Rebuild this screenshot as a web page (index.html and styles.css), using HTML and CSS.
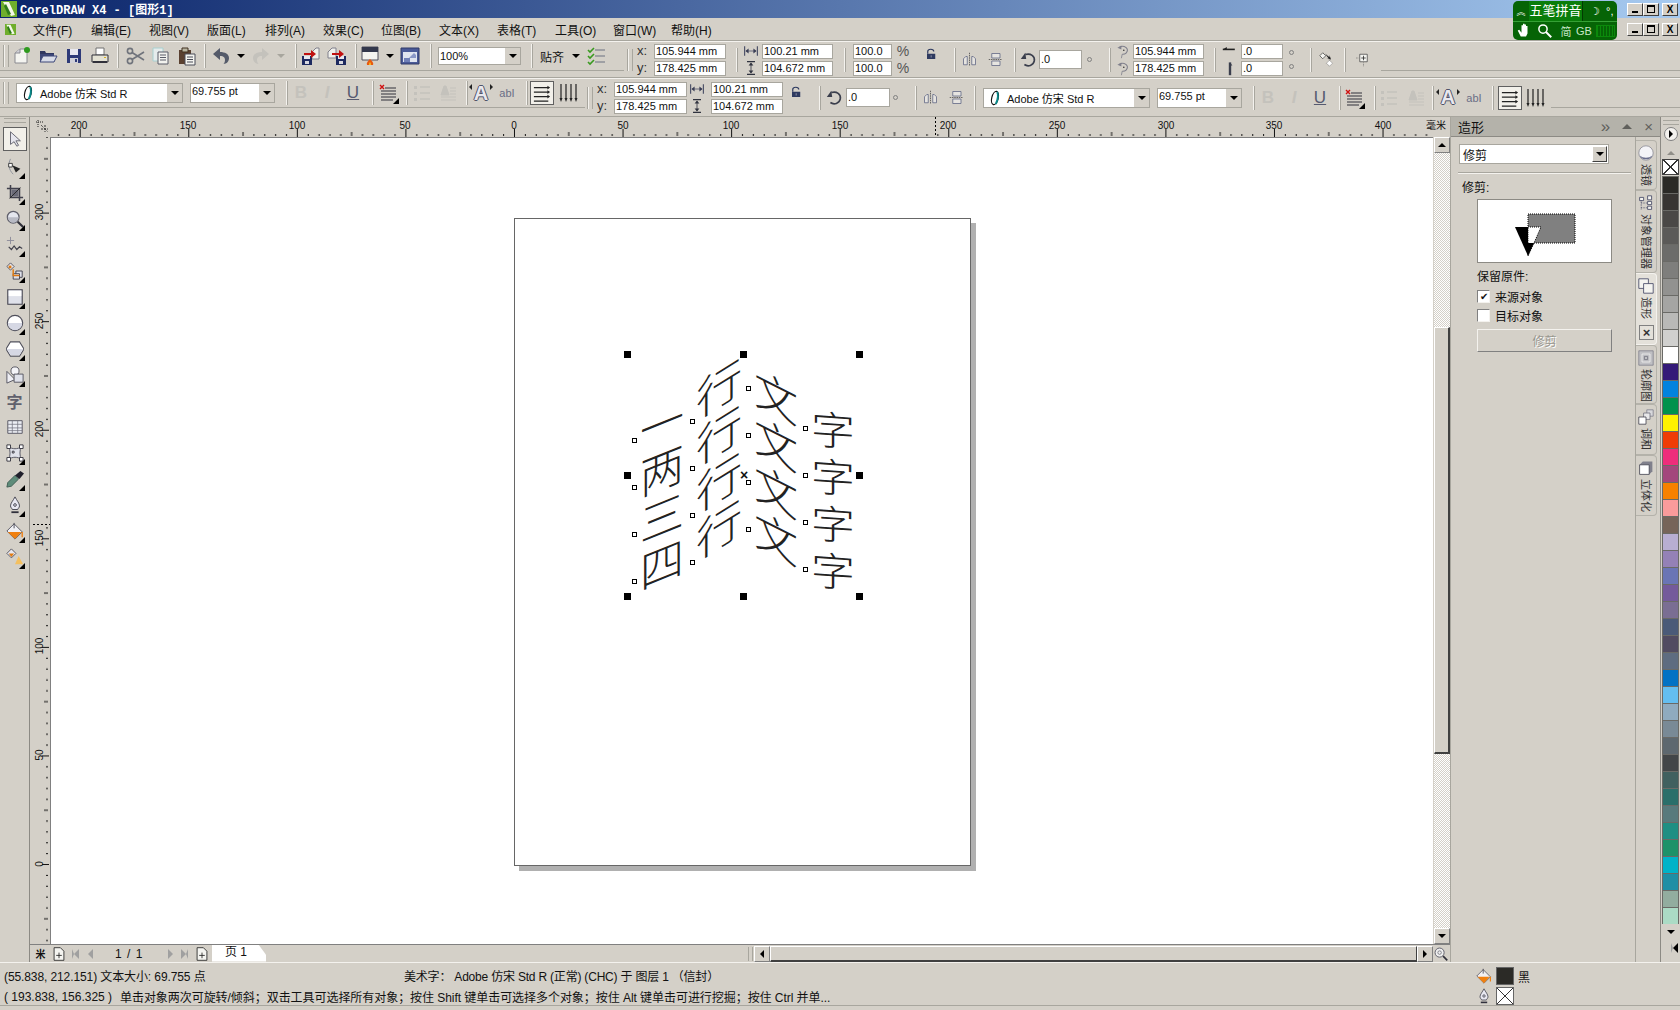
FILE: index.html
```html
<!DOCTYPE html>
<html lang="zh-CN">

<head>
  <meta charset="UTF-8" />
  <title>CorelDRAW X4 - [图形1]</title>
  <link rel="stylesheet" href="styles.css">
</head>

<body>
  <!-- icons -->
  <svg class="defs" aria-hidden="true">
    <symbol id="i-logo" viewBox="0 0 16 16"><path d="M0 0h16v16H0z" fill="#6fae2c"/><path d="M2 1h6l6 13-4 1L5 6z" fill="#f4f8ea"/><path d="M5 3l5 10-3 1L3 5z" fill="#2f7d1a"/></symbol>
    <symbol id="i-new" viewBox="0 0 20 20"><path d="M3 7l5-4h7v14H3z" fill="#f4f4f0" stroke="#8a8a90"/><path d="M3 7h5V3" fill="#d0d0d8" stroke="#8a8a90"/><circle cx="15" cy="4" r="3" fill="#2f9a1e"/></symbol>
    <symbol id="i-open" viewBox="0 0 20 20"><path d="M2 5h5l1 2h8v3H2z" fill="#2e3660"/><path d="M2 16V8h14v8z" fill="#3c4678"/><path d="M5 10h14l-3 6H2z" fill="#d8dce8" stroke="#3c4678"/></symbol>
    <symbol id="i-save" viewBox="0 0 20 20"><path d="M3 3h14v14H3z" fill="#2e3a78"/><path d="M6 3h8v6H6z" fill="#e8e8f0"/><path d="M6 12h8v5H6z" fill="#d0d0d8"/><path d="M11 13h2v3h-2z" fill="#2e3a78"/></symbol>
    <symbol id="i-print" viewBox="0 0 20 20"><path d="M6 2h8v7H6z" fill="#fff" stroke="#707070"/><path d="M2 9h16v7H2z" fill="#e4e2d4" stroke="#30303a"/><path d="M3 15h14v2H3z" fill="#30303a"/><path d="M14 11h2v1h-2z" fill="#d8b020"/></symbol>
    <symbol id="i-cut" viewBox="0 0 20 20"><g fill="none" stroke="#70747c" stroke-width="1.6"><circle cx="5" cy="5" r="2.6"/><circle cx="5" cy="15" r="2.6"/><path d="M7 6.500L19 14M7 13.500L19 6"/></g></symbol>
    <symbol id="i-copy" viewBox="0 0 20 20"><path d="M2 2h10v13H2z" fill="#e6ecec" stroke="#a8d0d0"/><path d="M7 6h10v12H7z" fill="#f2f2ee" stroke="#5a5c68"/><path d="M9 9h6M9 11.500h6M9 14h6" stroke="#5a5c68"/></symbol>
    <symbol id="i-paste" viewBox="0 0 20 20"><path d="M2 4h12v14H2z" fill="#5a4030"/><path d="M5 2h6v4H5z" fill="#b8b4a0" stroke="#403020"/><path d="M8 8h10v11H8z" fill="#f4f4f0" stroke="#4a4c58"/><path d="M10 11h6M10 13.500h6M10 16h6" stroke="#4a4c58"/></symbol>
    <symbol id="i-undo" viewBox="0 0 20 20"><path d="M9 2L2 8l7 6v-4c4 0 5 2 5 4 0 2-1 4-2 4 4 0 6-3 6-6 0-4-4-6-9-6z" fill="#555b6a"/></symbol>
    <symbol id="i-redo" viewBox="0 0 20 20"><path d="M11 2l7 6-7 6v-4c-4 0-5 2-5 4 0 2 1 4 2 4-4 0-6-3-6-6 0-4 4-6 9-6z" fill="#c4c2bc"/></symbol>
    <symbol id="i-import" viewBox="0 0 20 20"><path d="M11 6l4-4h3v11h-7z" fill="#f0f0ec" stroke="#80808c"/><path d="M1 10h10v9H1z" fill="#1e2a60"/><path d="M3 10h6v3H3z" fill="#e8e8f0"/><path d="M4 15h4v3H4z" fill="#d8d8e0"/><path d="M3 7h7V4l5 4-5 4V9H3z" fill="#c01010"/></symbol>
    <symbol id="i-export" viewBox="0 0 20 20"><path d="M1 6l4-4h4v10H1z" fill="#f0f0ec" stroke="#80808c"/><path d="M9 10h10v9H9z" fill="#1e2a60"/><path d="M11 10h6v3h-6z" fill="#e8e8f0"/><path d="M12 15h4v3h-4z" fill="#d8d8e0"/><path d="M5 7h7V4l5 4-5 4V9H5z" fill="#c01010"/></symbol>
    <symbol id="i-publish" viewBox="0 0 20 20"><path d="M2 1h16v13H2z" fill="#f4f4f0" stroke="#50505c"/><path d="M2 1h16v5H2z" fill="#33384c"/><path d="M7 19c-1-2 1-4 3-6 2 2 4 4 3 6z" fill="#e85a10"/><path d="M9 19c0-2 1-3 1-3s1 1 1 3z" fill="#f8c020"/></symbol>
    <symbol id="i-launch" viewBox="0 0 20 20"><path d="M1 2h18v16H1z" fill="#4a5a98" stroke="#303a68"/><path d="M3 6h14v10H3z" fill="#dfe4f0"/><path d="M9 12l5-5 2 2v3z" fill="#8a98c8"/><path d="M4 12h6v4H4z" fill="#7080b8"/></symbol>
    <symbol id="i-options" viewBox="0 0 20 20"><path d="M9 4h10M9 10h10M9 16h10" stroke="#6a7080"/><path d="M2 4l2 2 4-4M2 10l2 2 4-4M2 16l2 2 4-4" fill="none" stroke="#3a9a20" stroke-width="1.6"/></symbol>
    <symbol id="i-font" viewBox="0 0 20 20"><ellipse cx="10" cy="10" rx="4" ry="8.500" transform="rotate(14 10 10)" fill="none" stroke="#111" stroke-width="1.500"/><path d="M12.500 2.500c2 2 1.500 9-1.500 15" fill="none" stroke="#0a8a8a" stroke-width="2.400"/></symbol>
    <symbol id="i-bullets" viewBox="0 0 20 20"><path d="M2 2l4 4M6 2L2 6" stroke="#d01010" stroke-width="1.400"/><path d="M7 5h11M3 8h15M3 11h15M3 14h15M3 17h12" stroke="#30303a"/></symbol>
    <symbol id="i-dotlist" viewBox="0 0 20 20"><path d="M8 4h10M8 10h10M8 16h10" stroke="#c4c2bc" stroke-width="1.500"/><path d="M2 3h3v3H2zM2 9h3v3H2zM2 15h3v3H2z" fill="#c4c2bc"/></symbol>
    <symbol id="i-dropcap" viewBox="0 0 20 20"><path d="M3 12l3-9h2l3 9zM12 5h6M12 8h6M12 11h6M3 14h15M3 17h15" fill="#c4c2bc" stroke="#c4c2bc"/></symbol>
    <symbol id="i-horiz" viewBox="0 0 20 20"><path d="M1 4h16M1 9h16M1 14h16M1 19h16" stroke="#222" stroke-width="1.200"/><path d="M16 2l3 2-3 2zM16 7l3 2-3 2zM16 12l3 2-3 2z" fill="#222"/></symbol>
    <symbol id="i-vert" viewBox="0 0 20 20"><path d="M3 1v15M8 1v15M13 1v15M18 1v15" stroke="#222" stroke-width="1.200"/><path d="M1.500 15l1.500 4 1.500-4zM6.500 15l1.500 4 1.500-4zM11.500 15l1.500 4 1.500-4zM16.500 15l1.500 4 1.500-4z" fill="#222"/></symbol>
    <symbol id="i-lock" viewBox="0 0 20 20"><path d="M5 9V6c0-4 8-4 8 0" fill="none" stroke="#2e3a60" stroke-width="1.600"/><path d="M4 9h11v7H4z" fill="#2e3a60"/><path d="M9 11h1v3H9z" fill="#aab"/></symbol>
    <symbol id="i-fliph" viewBox="0 0 20 20"><path d="M10 1v18" stroke="#444" stroke-dasharray="2 1"/><path d="M2 9l3-3h2v11H2zM13 6h2l3 3v8h-5z" fill="#e6e4e0" stroke="#5a6080"/></symbol>
    <symbol id="i-flipv" viewBox="0 0 20 20"><path d="M1 10h18" stroke="#444" stroke-dasharray="2 1"/><path d="M5 2h11v6H5zM5 12h11v6H5z" fill="#e6e4e0" stroke="#5a6080"/></symbol>
    <symbol id="i-rotate" viewBox="0 0 20 20"><path d="M7 4c6-2 11 2 10 7-1 5-7 7-11 4" fill="none" stroke="#3a3e4c" stroke-width="1.800"/><path d="M2 9l5-7 1 7z" fill="#3a3e4c"/></symbol>
    <symbol id="i-width" viewBox="0 0 20 20"><path d="M2 4v12M18 4v12" stroke="#50546a" stroke-width="1.500"/><path d="M4 10h12" stroke="#50546a"/><path d="M3 10l4-3v6zM17 10l-4-3v6z" fill="#3a3e55"/></symbol>
    <symbol id="i-height" viewBox="0 0 20 20"><path d="M5 2h10M5 18h10" stroke="#30333f" stroke-width="1.500"/><path d="M10 4v12" stroke="#30333f"/><path d="M10 3l-3 4h6zM10 17l-3-4h6z" fill="#30333f"/></symbol>
    <symbol id="i-centerh" viewBox="0 0 20 20"><path d="M6 5a6 5 0 1 1 3 9" fill="none" stroke="#80808c" stroke-width="1.400"/><path d="M3 6l5-3v5z" fill="#80808c"/><path d="M9 14l-1 5" stroke="#80808c"/><circle cx="11" cy="9" r="1" fill="#333"/></symbol>
    <symbol id="i-skewh" viewBox="0 0 20 20"><path d="M1 8h15" stroke="#222" stroke-width="2"/><path d="M1 8l5-3v3z" fill="#222"/></symbol>
    <symbol id="i-skewv" viewBox="0 0 20 20"><path d="M10 3v16" stroke="#3a3e4c" stroke-width="3"/><path d="M10 3l3 4h-3z" fill="#3a3e4c"/></symbol>
    <symbol id="i-relative" viewBox="0 0 20 20"><path d="M1 5l4-4 4 4-4 4z" fill="#f4f4f0" stroke="#444"/><path d="M10 15l4-4 4 4-4 4z" fill="#fff" stroke="#555" stroke-dasharray="1 1"/><path d="M8 2l6 5V4l2 6-6-1h3z" fill="#222"/></symbol>
    <symbol id="i-origin" viewBox="0 0 20 20"><path d="M5 3h10v10H5z" fill="#f4f4f0" stroke="#444"/><path d="M10 5v6M7 8h6" stroke="#222"/><path d="M0 8h4M10 14v6" stroke="#666" stroke-dasharray="1 1"/></symbol>
    <symbol id="i-corner" viewBox="0 0 14 14"><path d="M1 3h8M3 1v8M6 6l7 7" stroke="#222" stroke-dasharray="1 1"/><path d="M6 10h7M10 6v7" stroke="#333" stroke-dasharray="2 1"/></symbol>
    <symbol id="i-pick" viewBox="0 0 20 20"><path d="M5 2v14l4-3 3 5 2-1-3-5h5z" fill="#e6e6ee" stroke="#60606c"/></symbol>
    <symbol id="i-shape" viewBox="0 0 20 20"><path d="M5 1c-3 6-2 12 3 17" fill="none" stroke="#8a8e98"/><path d="M3 6h4v4H3z" fill="#fff" stroke="#333"/><path d="M7 8l9 4-5 4z" fill="#222"/></symbol>
    <symbol id="i-crop" viewBox="0 0 20 20"><path d="M5 1v14h14M1 5h14v14" fill="none" stroke="#40404c" stroke-width="1.700"/><path d="M6 6h8v8H6z" fill="#6a6a78"/><path d="M4 16L16 4" stroke="#222"/></symbol>
    <symbol id="i-zoom" viewBox="0 0 20 20"><circle cx="8" cy="8" r="6.500" fill="#e4e6ee" stroke="#60606c" stroke-width="1.400"/><path d="M2 8h12a6 6 0 0 1-12 0z" fill="#b8bac4"/><path d="M13 13l6 6" stroke="#30303a" stroke-width="2.400"/></symbol>
    <symbol id="i-free" viewBox="0 0 20 20"><path d="M5 1v8M1 5h8" stroke="#8a8a98"/><path d="M3 12l3 3 3-4 3 4 3-3 3 2" fill="none" stroke="#40404c" stroke-width="1.300"/></symbol>
    <symbol id="i-smart" viewBox="0 0 20 20"><path d="M1 5l4-4 4 4-4 4z" fill="#e8e8ee" stroke="#50505c"/><path d="M3 4h3v3H3z" fill="#e07a10"/><path d="M11 10h7v7h-7z" fill="#dfe1ea" stroke="#40404c"/><path d="M8 13h7v6H8z" fill="#dfe1ea" stroke="#40404c"/><path d="M8 8v7h7" fill="none" stroke="#e07a10" stroke-width="1.600"/></symbol>
    <symbol id="i-rect" viewBox="0 0 20 20"><path d="M2 2h16v16H2z" fill="#dfe1ea" stroke="#40404c" stroke-width="1.200"/><path d="M3 3h14v6H3z" fill="#fff"/></symbol>
    <symbol id="i-ellipse" viewBox="0 0 20 20"><circle cx="10" cy="10" r="8.500" fill="#fff" stroke="#50505c" stroke-width="1.300"/><path d="M2 10h16a8 8 0 0 1-16 0z" fill="#d6d8e4"/></symbol>
    <symbol id="i-poly" viewBox="0 0 20 20"><path d="M5 2h10l5 8-5 8H5l-5-8z" fill="#fff" stroke="#50505c" stroke-width="1.300"/><path d="M1 10h18l-4 7H5z" fill="#d6d8e4"/></symbol>
    <symbol id="i-basic" viewBox="0 0 20 20"><circle cx="10" cy="5.500" r="4.500" fill="#f4f4f8" stroke="#50505c"/><path d="M1 6l9 9-9 4z" fill="#eeeef4" stroke="#50505c"/><path d="M9 9h10v9H9z" fill="#dfe1ea" stroke="#50505c"/></symbol>
    <symbol id="i-table" viewBox="0 0 20 20"><path d="M2 3h16v14H2z" fill="#eceef4" stroke="#50505c"/><path d="M2 7h16M2 11h16M2 14h16M7 3v14M13 3v14" stroke="#70707c" stroke-width=".8"/></symbol>
    <symbol id="i-inter" viewBox="0 0 20 20"><path d="M3 3c4 3 10 3 14 0-2 4-2 10 0 14-4-3-10-3-14 0 2-4 2-10 0-14z" fill="#e0e2ea" stroke="#50505c"/><path d="M1 1h4v4H1zM15 1h4v4h-4zM1 15h4v4H1zM15 15h4v4h-4zM7 8h2v2H7z" fill="#fff" stroke="#30303a"/></symbol>
    <symbol id="i-drop" viewBox="0 0 20 20"><path d="M1 19l1-5 8-8 4 4-8 8z" fill="#5e8c7a" stroke="#3c5a50"/><path d="M10 6l6-5 4 3-5 6z" fill="#20202c"/></symbol>
    <symbol id="i-pen" viewBox="0 0 20 20"><path d="M10 1c-2 4-5 7-5 10 0 2 2 3 2 4h6c0-1 2-2 2-4 0-3-3-6-5-10z" fill="#e8e8f2" stroke="#40404c"/><circle cx="10" cy="10" r="1.500" fill="none" stroke="#40404c"/><path d="M6 17h8v2H6z" fill="#30303c"/></symbol>
    <symbol id="i-fill" viewBox="0 0 20 20"><path d="M1 10l8-8 9 9-8 8z" fill="#f0f0f4" stroke="#50505c"/><path d="M2 11h15l-7 8z" fill="#f08010"/><path d="M9 1v6" stroke="#40404c"/><path d="M18 11v6" stroke="#f08010" stroke-width="1.500"/></symbol>
    <symbol id="i-ifill" viewBox="0 0 20 20"><path d="M1 6l5-5 5 5-5 5z" fill="#e8e8f0" stroke="#50505c"/><path d="M3 6h6l-3 4z" fill="#e07a10"/><path d="M10 18l4-9 5 9z" fill="#f4c060"/></symbol>
    <symbol id="i-hand" viewBox="0 0 20 20"><path d="M5 18L1 10l2-1 3 4V3h2v7V1h2v9V2h2v8V4h2v10l-2 4z" fill="#fff"/></symbol>
    <symbol id="i-mag" viewBox="0 0 20 20"><circle cx="8" cy="8" r="5.500" fill="none" stroke="#fff" stroke-width="2"/><path d="M12 12l7 7" stroke="#fff" stroke-width="2.500"/></symbol>
    <symbol id="i-navzoom" viewBox="0 0 20 20"><circle cx="8" cy="8" r="6.500" fill="#eee" stroke="#60606c" stroke-width="1.400"/><circle cx="8" cy="8" r="2.500" fill="none" stroke="#60606c"/><path d="M13 13l6 6" stroke="#30303a" stroke-width="2.400"/></symbol>
    <symbol id="i-addpage" viewBox="0 0 20 20"><path d="M3 1h9l5 5v13H3z" fill="#f4f4f0" stroke="#222" stroke-width="1.200"/><path d="M10 8v8M6 12h8" stroke="#222" stroke-width="1.200"/></symbol>
    <symbol id="i-trim" viewBox="0 0 20 20"><path d="M1 1h12v12H1z" fill="#f4f4f0" stroke="#3c4060"/><path d="M7 7h12v12H7z" fill="#f4f4f0" stroke="#3c4060"/></symbol>
    <symbol id="i-contour" viewBox="0 0 20 20"><path d="M1 1h18v18H1z" fill="#c0c0c4" stroke="#80808c"/><path d="M5 5h10v10H5z" fill="none" stroke="#f0f0f0"/><path d="M8 8h4v4H8z" fill="none" stroke="#70707c"/></symbol>
    <symbol id="i-blend" viewBox="0 0 20 20"><path d="M11 1h8v8h-8z" fill="#d8d8dc" stroke="#80808c"/><path d="M7 5h8v8H7z" fill="#e8e8ea" stroke="#70707c"/><path d="M1 10h9v9H1z" fill="#fff" stroke="#40404c"/></symbol>
    <symbol id="i-extrude" viewBox="0 0 20 20"><path d="M2 6l4-4h12v12l-4 4z" fill="#80808c"/><path d="M2 6h12v12H2z" fill="#fff" stroke="#40404c"/></symbol>
    <symbol id="i-lens" viewBox="0 0 20 20"><circle cx="10" cy="10" r="9" fill="#f4f4f8" stroke="#8a8a94"/><path d="M2 13a9 9 0 0 0 16 0 12 12 0 0 1-16 0z" fill="#6a6e8c"/></symbol>
    <symbol id="i-tree" viewBox="0 0 20 20"><path d="M2 3h5v4H2zM12 1h5v5h-5zM12 8h5v4h-5zM12 14h5v4h-5z" fill="#f4f4f0" stroke="#3c4060"/><path d="M4 7v12M4 10h8M4 16h8" stroke="#3c4060" stroke-dasharray="1 1"/></symbol>
  </svg>

  <div class="app">
    <header class="titlebar">
      <svg class="title-logo"><use href="#i-logo" /></svg>
      <span class="title-text">CorelDRAW X4 - [图形1]</span>
      <div class="winctl">
        <button class="wbtn"><span class="w-min"></span></button>
        <button class="wbtn"><span class="w-max"></span></button>
        <button class="wbtn wbtn-x">X</button>
      </div>
    </header>

    <nav class="menubar">
      <svg class="menu-logo"><use href="#i-logo" /></svg>
      <span class="menu">文件(F)</span>
      <span class="menu">编辑(E)</span>
      <span class="menu">视图(V)</span>
      <span class="menu">版面(L)</span>
      <span class="menu">排列(A)</span>
      <span class="menu">效果(C)</span>
      <span class="menu">位图(B)</span>
      <span class="menu">文本(X)</span>
      <span class="menu">表格(T)</span>
      <span class="menu">工具(O)</span>
      <span class="menu">窗口(W)</span>
      <span class="menu">帮助(H)</span>
      <div class="winctl">
        <button class="wbtn"><span class="w-min"></span></button>
        <button class="wbtn"><span class="w-max"></span></button>
        <button class="wbtn wbtn-x">X</button>
      </div>
    </nav>

    <!-- 五笔输入法 -->
    <div class="ime">
      <div class="ime-top">
        <span class="ime-up">︽</span>
        <span class="ime-name">五笔拼音</span>
        <span class="ime-moon">☽</span>
        <span class="ime-dots">°,</span>
      </div>
      <div class="ime-bottom">
        <svg class="ime-ic"><use href="#i-hand" /></svg>
        <svg class="ime-ic"><use href="#i-mag" /></svg>
        <span class="ime-txt">简</span>
        <span class="ime-txt">GB</span>
        <span class="ime-kb"></span>
      </div>
    </div>

    <div class="tbrow">
      <div class="bar bar-std">
        <span class="grip"></span>
        <button class="btn"><svg><use href="#i-new" /></svg></button>
        <button class="btn"><svg><use href="#i-open" /></svg></button>
        <button class="btn"><svg><use href="#i-save" /></svg></button>
        <button class="btn"><svg><use href="#i-print" /></svg></button>
        <span class="sep ml4"></span>
        <button class="btn ml3"><svg><use href="#i-cut" /></svg></button>
        <button class="btn"><svg><use href="#i-copy" /></svg></button>
        <button class="btn"><svg><use href="#i-paste" /></svg></button>
        <span class="sep ml4"></span>
        <button class="btn ml2"><svg><use href="#i-undo" /></svg></button>
        <span class="arr"></span>
        <button class="btn"><svg><use href="#i-redo" /></svg></button>
        <span class="arr arr-off"></span>
        <span class="sep ml7"></span>
        <button class="btn ml1"><svg><use href="#i-import" /></svg></button>
        <button class="btn"><svg><use href="#i-export" /></svg></button>
        <span class="sep ml5"></span>
        <button class="btn"><svg><use href="#i-publish" /></svg></button>
        <span class="arr"></span>
        <button class="btn"><svg><use href="#i-launch" /></svg></button>
        <span class="sep ml7"></span>
        <div class="combo combo-zoom ml6"><span class="combo-val">100%</span><span class="combo-arr"></span></div>
        <span class="sep ml10"></span>
        <span class="snap ml7">贴齐</span>
        <span class="arr ml5"></span>
        <button class="btn"><svg><use href="#i-options" /></svg></button>
      </div>

      <div class="bar-prop">
        <span class="grip ml3"></span>
        <div class="labels w17 ml4"><span>x:</span><span>y:</span></div>
        <div class="fields w72"><span class="field">105.944 mm</span><span class="field">178.425 mm</span></div>
        <span class="sep ml10"></span>
        <div class="icons ml5"><svg><use href="#i-width" /></svg><svg><use href="#i-height" /></svg></div>
        <div class="fields w71 ml3"><span class="field">100.21 mm</span><span class="field">104.672 mm</span></div>
        <span class="sep ml11"></span>
        <div class="fields w39 ml7"><span class="field">100.0</span><span class="field">100.0</span></div>
        <div class="labels w14 ml4 pct"><span>%</span><span>%</span></div>
        <button class="btn btn-sm ml8 nudge"><svg><use href="#i-lock" /></svg></button>
        <span class="sep ml10"></span>
        <button class="btn btn-sm"><svg><use href="#i-fliph" /></svg></button>
        <button class="btn btn-sm"><svg><use href="#i-flipv" /></svg></button>
        <span class="sep ml6"></span>
        <div class="rot ml3"><svg><use href="#i-rotate" /></svg></div>
        <span class="field w43">.0</span>
        <span class="deg ml5"></span>
        <span class="sep ml15"></span>
        <div class="icons ml4"><svg><use href="#i-centerh" /></svg><svg><use href="#i-centerh" /></svg></div>
        <div class="fields w71 ml2"><span class="field">105.944 mm</span><span class="field">178.425 mm</span></div>
        <span class="sep ml10"></span>
        <div class="icons ml6"><svg><use href="#i-skewh" /></svg><svg><use href="#i-skewv" /></svg></div>
        <div class="fields w42 ml3"><span class="field">.0</span><span class="field">.0</span></div>
        <div class="degs ml4"><span class="deg"></span><span class="deg"></span></div>
        <span class="sep ml14"></span>
        <button class="btn btn-sm ml1"><svg><use href="#i-relative" /></svg></button>
        <span class="sep ml5"></span>
        <button class="btn btn-sm ml4"><svg><use href="#i-origin" /></svg></button>
      </div>
      <div class="bar bar-rest"></div>
    </div>

    <div class="tbrow tbrow2">
      <div class="bar bar-text">
        <span class="grip"></span>
        <div class="combo combo-font ml7"><svg class="combo-ic"><use href="#i-font" /></svg><span class="combo-val">Adobe 仿宋 Std R</span><span class="combo-arr"></span></div>
        <div class="combo combo-size ml7"><span class="combo-val">69.755 pt</span><span class="combo-arr"></span></div>
        <span class="sep ml11"></span>
        <button class="btn txt-b off">B</button>
        <button class="btn txt-i off">I</button>
        <button class="btn txt-u">U</button>
        <span class="sep ml6"></span>
        <button class="btn ml1 fly"><svg><use href="#i-bullets" /></svg></button>
        <span class="sep ml5"></span>
        <button class="btn ml1"><svg><use href="#i-dotlist" /></svg></button>
        <button class="btn"><svg><use href="#i-dropcap" /></svg></button>
        <span class="sep ml5"></span>
        <button class="btn txt-a">A</button>
        <button class="btn txt-ab">abI</button>
        <span class="sep ml6"></span>
        <button class="btn btn-on ml2"><svg><use href="#i-horiz" /></svg></button>
        <button class="btn ml1"><svg><use href="#i-vert" /></svg></button>
      </div>

      <div class="bar-prop bar-prop2">
        <span class="grip ml2"></span>
        <div class="labels w17 ml4"><span>x:</span><span>y:</span></div>
        <div class="fields w73"><span class="field">105.944 mm</span><span class="field">178.425 mm</span></div>
        <div class="icons ml2"><svg><use href="#i-width" /></svg><svg><use href="#i-height" /></svg></div>
        <div class="fields w72 ml6"><span class="field">100.21 mm</span><span class="field">104.672 mm</span></div>
        <button class="btn btn-sm nudge"><svg><use href="#i-lock" /></svg></button>
        <span class="sep ml10"></span>
        <div class="rot ml4"><svg><use href="#i-rotate" /></svg></div>
        <span class="field w44 ml1">.0</span>
        <span class="deg ml3"></span>
        <span class="sep ml15"></span>
        <button class="btn btn-sm"><svg><use href="#i-fliph" /></svg></button>
        <button class="btn btn-sm"><svg><use href="#i-flipv" /></svg></button>
        <span class="sep ml5"></span>
        <div class="combo combo-font ml7"><svg class="combo-ic"><use href="#i-font" /></svg><span class="combo-val">Adobe 仿宋 Std R</span><span class="combo-arr"></span></div>
        <div class="combo combo-size ml7"><span class="combo-val">69.755 pt</span><span class="combo-arr"></span></div>
        <span class="sep ml11"></span>
        <button class="btn txt-b off">B</button>
        <button class="btn txt-i off">I</button>
        <button class="btn txt-u">U</button>
        <span class="sep ml6"></span>
        <button class="btn fly"><svg><use href="#i-bullets" /></svg></button>
        <span class="sep ml7"></span>
        <button class="btn"><svg><use href="#i-dotlist" /></svg></button>
        <button class="btn ml1"><svg><use href="#i-dropcap" /></svg></button>
        <span class="sep ml3"></span>
        <button class="btn txt-a ml1">A</button>
        <button class="btn txt-ab">abI</button>
        <span class="sep ml5"></span>
        <button class="btn btn-on ml4"><svg><use href="#i-horiz" /></svg></button>
        <button class="btn"><svg><use href="#i-vert" /></svg></button>
      </div>
      <div class="bar bar-rest"></div>
    </div>

    <main class="main">
      <aside class="toolbox">
        <span class="hgrip"></span>
        <button class="tool tool-on"><svg><use href="#i-pick" /></svg></button>
        <button class="tool fly"><svg><use href="#i-shape" /></svg></button>
        <button class="tool fly"><svg><use href="#i-crop" /></svg></button>
        <button class="tool fly"><svg><use href="#i-zoom" /></svg></button>
        <button class="tool fly"><svg><use href="#i-free" /></svg></button>
        <button class="tool fly"><svg><use href="#i-smart" /></svg></button>
        <button class="tool fly"><svg><use href="#i-rect" /></svg></button>
        <button class="tool fly"><svg><use href="#i-ellipse" /></svg></button>
        <button class="tool fly"><svg><use href="#i-poly" /></svg></button>
        <button class="tool fly"><svg><use href="#i-basic" /></svg></button>
        <button class="tool tool-text">字</button>
        <button class="tool"><svg><use href="#i-table" /></svg></button>
        <button class="tool fly"><svg><use href="#i-inter" /></svg></button>
        <button class="tool fly"><svg><use href="#i-drop" /></svg></button>
        <button class="tool fly"><svg><use href="#i-pen" /></svg></button>
        <button class="tool fly"><svg><use href="#i-fill" /></svg></button>
        <button class="tool fly"><svg><use href="#i-ifill" /></svg></button>
      </aside>

      <section class="workspace">
        <div class="ruler-top">
          <svg class="ruler-corner"><use href="#i-corner" /></svg>
          <svg class="ruler-h" width="1400" height="20">
            <defs>
              <pattern id="ticks-h" width="108.57" height="20" x="29.7" patternUnits="userSpaceOnUse">
                <rect x="0" y="12" width="1" height="8" />
                <rect x="10.86" y="17" width="1" height="2" />
                <rect x="21.71" y="17" width="1" height="2" />
                <rect x="32.57" y="17" width="1" height="2" />
                <rect x="43.43" y="17" width="1" height="2" />
                <rect x="54.29" y="15" width="1" height="4" />
                <rect x="65.14" y="17" width="1" height="2" />
                <rect x="76" y="17" width="1" height="2" />
                <rect x="86.86" y="17" width="1" height="2" />
                <rect x="97.71" y="17" width="1" height="2" />
              </pattern>
            </defs>
            <rect width="1382" height="20" fill="url(#ticks-h)" />
            <line class="guide" x1="885.500" y1="0" x2="885.500" y2="20" />
            <text x="29" y="12">200</text>
            <text x="138" y="12">150</text>
            <text x="247" y="12">100</text>
            <text x="355" y="12">50</text>
            <text x="464" y="12">0</text>
            <text x="573" y="12">50</text>
            <text x="681" y="12">100</text>
            <text x="790" y="12">150</text>
            <text x="898" y="12">200</text>
            <text x="1007" y="12">250</text>
            <text x="1116" y="12">300</text>
            <text x="1224" y="12">350</text>
            <text x="1333" y="12">400</text>
            <text x="1386" y="12">毫米</text>
          </svg>
        </div>

        <div class="mid">
          <svg class="ruler-v" width="21" height="807">
            <defs>
              <pattern id="ticks-v" width="21" height="108.57" y="75.6" patternUnits="userSpaceOnUse">
                <rect x="13" y="0" width="7" height="1" />
                <rect x="17" y="10.86" width="2" height="1" />
                <rect x="17" y="21.71" width="2" height="1" />
                <rect x="17" y="32.57" width="2" height="1" />
                <rect x="17" y="43.43" width="2" height="1" />
                <rect x="15" y="54.29" width="4" height="1" />
                <rect x="17" y="65.14" width="2" height="1" />
                <rect x="17" y="76" width="2" height="1" />
                <rect x="17" y="86.86" width="2" height="1" />
                <rect x="17" y="97.71" width="2" height="1" />
              </pattern>
            </defs>
            <rect width="21" height="807" fill="url(#ticks-v)" />
            <line class="guide" x1="4" y1="387.500" x2="21" y2="387.500" />
            <text transform="translate(14 75) rotate(-90)">300</text>
            <text transform="translate(14 184) rotate(-90)">250</text>
            <text transform="translate(14 292) rotate(-90)">200</text>
            <text transform="translate(14 401) rotate(-90)">150</text>
            <text transform="translate(14 509) rotate(-90)">100</text>
            <text transform="translate(14 618) rotate(-90)">50</text>
            <text transform="translate(14 727) rotate(-90)">0</text>
          </svg>

          <div class="canvas">
            <div class="page"></div>

            <!-- 封套后的美术字 -->
            <div class="art">
              <div class="art-col col1">
                <div class="cell"><span class="glyph">一</span><i class="node"></i></div>
                <div class="cell"><span class="glyph">两</span><i class="node"></i></div>
                <div class="cell"><span class="glyph">三</span><i class="node"></i></div>
                <div class="cell"><span class="glyph">四</span><i class="node"></i></div>
              </div>
              <div class="art-col col2">
                <div class="cell"><span class="glyph">行</span><i class="node"></i></div>
                <div class="cell"><span class="glyph">行</span><i class="node"></i></div>
                <div class="cell"><span class="glyph">行</span><i class="node"></i></div>
                <div class="cell"><span class="glyph">行</span><i class="node"></i></div>
              </div>
              <div class="art-col col3">
                <div class="cell"><span class="glyph">文</span><i class="node"></i></div>
                <div class="cell"><span class="glyph">文</span><i class="node"></i></div>
                <div class="cell"><span class="glyph">文</span><i class="node"></i></div>
                <div class="cell"><span class="glyph">文</span><i class="node"></i></div>
              </div>
              <div class="art-col col4">
                <div class="cell"><span class="glyph">字</span><i class="node"></i></div>
                <div class="cell"><span class="glyph">字</span><i class="node"></i></div>
                <div class="cell"><span class="glyph">字</span><i class="node"></i></div>
                <div class="cell"><span class="glyph">字</span><i class="node"></i></div>
              </div>
            </div>

            <div class="sel">
              <i class="hd"></i><i class="hd"></i><i class="hd"></i>
              <i class="hd"></i><b class="cross">×</b><i class="hd"></i>
              <i class="hd"></i><i class="hd"></i><i class="hd"></i>
            </div>
          </div>

          <div class="vscroll">
            <button class="sbtn"><span class="tri-up"></span></button>
            <span class="track track-top"></span>
            <span class="thumb-v"></span>
            <span class="track"></span>
            <button class="sbtn"><span class="tri-down"></span></button>
          </div>
        </div>

        <div class="nav">
          <span class="nav-corner">米</span>
          <svg class="nav-ic"><use href="#i-addpage" /></svg>
          <span class="go go-first"></span>
          <span class="go go-prev"></span>
          <span class="pagenum">1 / 1</span>
          <span class="go go-next"></span>
          <span class="go go-last"></span>
          <svg class="nav-ic nav-ic2"><use href="#i-addpage" /></svg>
          <span class="pagetab">页 1</span>
          <span class="hgrip2"></span>
          <button class="sbtn"><span class="tri-left"></span></button>
          <span class="thumb-h"></span>
          <button class="sbtn"><span class="tri-right"></span></button>
          <svg class="nav-zoom"><use href="#i-navzoom" /></svg>
        </div>
      </section>

      <section class="docker">
        <div class="docker-title">
          <span>造形</span>
          <span class="docker-ctl">
            <span class="dk-more">»</span><span class="dk-up"></span><span>×</span>
          </span>
        </div>
        <div class="docker-body">
          <div class="combo combo-dock"><span class="combo-val">修剪</span><span class="combo-arr"></span></div>
          <hr class="dock-rule">
          <p class="dock-label">修剪:</p>
          <div class="dock-inner">
            <svg class="preview" width="135" height="64">
              <rect x="50" y="14" width="47" height="29" fill="#808080" stroke="#000" stroke-dasharray="1 1" />
              <path d="M37 27h13v29z" />
              <path d="M50 27h13L56 43 50 56z" fill="#fff" stroke="#000" stroke-dasharray="1 1" />
              <path d="M50 56l6-13H50z" />
            </svg>
            <p class="dock-keep">保留原件:</p>
            <label class="check"><span class="box box-on">✔</span>来源对象</label>
            <label class="check"><span class="box"></span>目标对象</label>
            <button class="dock-btn">修剪</button>
          </div>
        </div>
      </section>

      <aside class="tabs">
        <div class="tab tab1"><svg><use href="#i-lens" /></svg><span>透镜</span></div>
        <div class="tab tab2"><svg><use href="#i-tree" /></svg><span>对象管理器</span></div>
        <div class="tab tab3 tab-on"><svg><use href="#i-trim" /></svg><span>造形</span><b class="tab-x">×</b></div>
        <div class="tab tab4"><svg><use href="#i-contour" /></svg><span>轮廓图</span></div>
        <div class="tab tab5"><svg><use href="#i-blend" /></svg><span>调和</span></div>
        <div class="tab tab6"><svg><use href="#i-extrude" /></svg><span>立体化</span></div>
      </aside>

      <aside class="palette">
        <span class="hgrip hgrip-pal"></span>
        <span class="pal-play"></span>
        <span class="tri-up pal-up"></span>
        <span class="sw sw-none"></span>
        <span class="sw" style="background:#2b2a26"></span>
        <span class="sw" style="background:#383532"></span>
        <span class="sw" style="background:#4a4846"></span>
        <span class="sw" style="background:#5b5a58"></span>
        <span class="sw" style="background:#6c6c6a"></span>
        <span class="sw" style="background:#7e7e7c"></span>
        <span class="sw" style="background:#929290"></span>
        <span class="sw" style="background:#a5a5a3"></span>
        <span class="sw" style="background:#b9b9b7"></span>
        <span class="sw" style="background:#d0d0ce"></span>
        <span class="sw" style="background:#ffffff"></span>
        <span class="sw" style="background:#341a78"></span>
        <span class="sw" style="background:#0283de"></span>
        <span class="sw" style="background:#00924c"></span>
        <span class="sw" style="background:#fff200"></span>
        <span class="sw" style="background:#f03c05"></span>
        <span class="sw" style="background:#ee2d7b"></span>
        <span class="sw" style="background:#a3477c"></span>
        <span class="sw" style="background:#f78100"></span>
        <span class="sw" style="background:#fa9b9b"></span>
        <span class="sw" style="background:#766459"></span>
        <span class="sw" style="background:#b8aed2"></span>
        <span class="sw" style="background:#9481b6"></span>
        <span class="sw" style="background:#6a75b5"></span>
        <span class="sw" style="background:#745a9b"></span>
        <span class="sw" style="background:#7a6e93"></span>
        <span class="sw" style="background:#4a5a78"></span>
        <span class="sw" style="background:#514b61"></span>
        <span class="sw" style="background:#5e6c80"></span>
        <span class="sw" style="background:#0272c4"></span>
        <span class="sw" style="background:#64bef0"></span>
        <span class="sw" style="background:#8fabbf"></span>
        <span class="sw" style="background:#798a96"></span>
        <span class="sw" style="background:#5d686f"></span>
        <span class="sw" style="background:#424648"></span>
        <span class="sw" style="background:#40605f"></span>
        <span class="sw" style="background:#2a6f6a"></span>
        <span class="sw" style="background:#587a7c"></span>
        <span class="sw" style="background:#1f8f83"></span>
        <span class="sw" style="background:#1d9269"></span>
        <span class="sw" style="background:#00b3c8"></span>
        <span class="sw" style="background:#1f8fa5"></span>
        <span class="sw" style="background:#92ad9f"></span>
        <span class="sw" style="background:#abdbc5"></span>
        <span class="tri-down pal-down"></span>
        <span class="go go-last pal-end"></span>
      </aside>
    </main>

    <footer class="status">
      <div class="status-left">
        <div class="st-row"><span class="st-a">(55.838, 212.151) 文本大小: 69.755 点</span><span class="st-c">美术字： Adobe 仿宋 Std R (正常) (CHC) 于 图层 1 （信封）</span></div>
        <div class="st-row"><span class="st-b">( 193.838, 156.325 )</span><span class="st-d">单击对象两次可旋转/倾斜；双击工具可选择所有对象；按住 Shift 键单击可选择多个对象；按住 Alt 键单击可进行挖掘；按住 Ctrl 并单...</span></div>
      </div>
      <div class="status-right">
        <div class="st-color"><svg><use href="#i-fill" /></svg><span class="st-sw st-black"></span><span>黑</span></div>
        <div class="st-color"><svg><use href="#i-pen" /></svg><span class="st-sw st-none"></span></div>
      </div>
    </footer>
  </div>
</body>

</html>
```

FILE: styles.css
```css
* {
  box-sizing: border-box;
}

html,
body {
  margin: 0;
  height: 100%;
  overflow: hidden;
}

body {
  background: #d4d0c8;
  color: #111;
  font: 12px "Liberation Sans", "Noto Sans CJK SC", sans-serif;
}

button {
  font: inherit;
  padding: 0;
  border: none;
  background: none;
  color: inherit;
}

p {
  margin: 0;
}

.defs {
  position: absolute;
  width: 0;
  height: 0;
}

.app {
  position: relative;
  width: 1680px;
  height: 1010px;
  display: flex;
  flex-direction: column;
  overflow: hidden;
}

/* title + menu */
.titlebar {
  height: 18px;
  display: flex;
  align-items: center;
  background: linear-gradient(90deg, #0a246a, #a6caf0);
  color: #fff;
}

.title-logo {
  width: 16px;
  height: 16px;
  margin: 0 3px 0 1px;
}

.title-text {
  font: bold 12px "Liberation Mono", "Noto Sans CJK SC", monospace;
}

.winctl {
  margin-left: auto;
  display: flex;
  padding-right: 2px;
}

.wbtn {
  width: 16px;
  height: 13px;
  display: flex;
  align-items: center;
  justify-content: center;
  background: #d4d0c8;
  border: 1px solid;
  border-color: #fff #404040 #404040 #fff;
  font: bold 10px "Liberation Sans", sans-serif;
  color: #000;
}

.wbtn-x {
  margin-left: 3px;
}

.w-min {
  width: 6px;
  height: 2px;
  margin-top: 5px;
  background: #000;
}

.w-max {
  width: 8px;
  height: 8px;
  border: 1px solid #000;
  border-top-width: 2px;
}

.menubar {
  height: 23px;
  display: flex;
  align-items: center;
  border-bottom: 1px solid #a8a69e;
}

.menu-logo {
  width: 11px;
  height: 17px;
  margin: 0 17px 0 5px;
}

.menu {
  width: 58px;
  font-size: 12px;
}

/* 输入法悬浮条 */
.ime {
  position: absolute;
  left: 1513px;
  top: 1px;
  width: 104px;
  height: 39px;
  border-radius: 5px;
  background: #066406;
  color: #fff;
}

.ime-top {
  height: 21px;
  display: flex;
  align-items: center;
  border-bottom: 1px solid #35a035;
}

.ime-up {
  width: 16px;
  text-align: center;
  font-size: 9px;
}

.ime-name {
  width: 54px;
  height: 20px;
  background: #0a7d0a;
  font-size: 13px;
  line-height: 20px;
  text-align: center;
  white-space: nowrap;
  border-right: 1px solid #023a02;
}

.ime-moon {
  margin-left: 7px;
  font-size: 11px;
}

.ime-dots {
  margin-left: 6px;
  font-size: 11px;
}

.ime-bottom {
  height: 17px;
  display: flex;
  align-items: center;
  padding-left: 4px;
}

.ime-ic {
  width: 15px;
  height: 15px;
  margin-right: 5px;
  flex: none;
}

.ime-txt {
  width: 18px;
  flex: none;
  text-align: center;
  color: #c6e6c6;
  font-size: 11px;
}

.ime-kb {
  width: 19px;
  height: 12px;
  margin-left: 3px;
  flex: none;
  border: 1px solid #0b8a0b;
  background: repeating-linear-gradient(90deg, #0b8a0b 0 1px, transparent 1px 3px);
}

/* toolbars */
.tbrow {
  height: 37px;
  display: flex;
  align-items: flex-start;
  border-top: 1px solid #f4f2ee;
  border-bottom: 1px solid #a8a69e;
}

.tbrow2 {
  height: 39px;
}

.bar {
  height: 29px;
  display: flex;
  align-items: center;
  border-bottom: 1px solid #a8a69e;
}

.bar-std {
  width: 624px;
}

.bar-text {
  width: 585px;
}

.bar-rest {
  flex: 1;
}

.bar-prop {
  width: 757px;
  align-self: stretch;
  display: flex;
  align-items: center;
}

.bar-prop2 {
  width: 966px;
}

.grip {
  width: 6px;
  height: 22px;
  margin-left: 3px;
  flex: none;
  border-left: 1px solid #a8a69e;
  border-right: 1px solid #a8a69e;
  box-shadow: inset 1px 0 #f4f2ee;
}

.sep {
  width: 2px;
  height: 24px;
  flex: none;
  border-left: 1px solid #f4f2ee;
  border-right: 1px solid #a8a69e;
}

.btn {
  width: 26px;
  height: 24px;
  flex: none;
  display: flex;
  align-items: center;
  justify-content: center;
  position: relative;
}

.btn svg {
  width: 20px;
  height: 20px;
}

.btn-sm svg {
  width: 15px;
  height: 15px;
}

.btn-on {
  width: 24px;
  background: #f2f0ea;
  border: 1px solid #606060;
}

.btn-on svg {
  width: 18px;
  height: 18px;
}

.nudge {
  margin-top: -10px;
}

.arr {
  width: 14px;
  height: 24px;
  flex: none;
  position: relative;
}

.arr::after,
.combo-arr::after {
  content: "";
  position: absolute;
  left: 50%;
  top: 50%;
  margin: -2px 0 0 -4px;
  border: 4px solid transparent;
  border-top: 4px solid #000;
  border-bottom: 0;
}

.arr-off::after {
  border-top-color: #a8a69e;
}

.fly::before {
  content: "";
  position: absolute;
  right: 2px;
  bottom: 1px;
  border-left: 6px solid transparent;
  border-bottom: 6px solid #000;
}

.txt-b,
.txt-i,
.txt-u {
  font: bold 17px "Liberation Sans", sans-serif;
  color: #565a70;
}

.txt-u {
  text-decoration: underline;
  font-weight: normal;
}

.txt-i {
  font-style: italic;
}

.off {
  color: #c4c2bc;
}

.txt-a {
  font: bold 20px "Liberation Sans", sans-serif;
  color: #e8e8ee;
  text-shadow: 1px 0 #50546a, -1px 0 #50546a, 0 1px #50546a, 0 -1px #50546a;
}

/* 字母 A 左右上角的小箭头 */
.txt-a::before,
.txt-a::after {
  content: "";
  position: absolute;
  top: 3px;
  border: 3px solid transparent;
}

.txt-a::before {
  left: 1px;
  border-left: 0;
  border-right-color: #222;
}

.txt-a::after {
  right: 1px;
  border-right: 0;
  border-left-color: #222;
}

.txt-ab {
  font-size: 11px;
  color: #6a6e86;
}

.combo {
  height: 18px;
  flex: none;
  display: flex;
  align-items: center;
  background: #fff;
  border: 1px solid #a8a69e;
  position: relative;
}

.combo-zoom {
  width: 83px;
}

.combo-font {
  width: 167px;
  height: 20px;
}

.combo-size {
  width: 85px;
  height: 20px;
}

.combo-val {
  flex: 1;
  padding-left: 1px;
  white-space: nowrap;
  font-size: 11px;
}

.combo-font .combo-val {
  padding-left: 4px;
}

.combo-size .combo-val {
  margin-top: -4px;
}

.combo-ic {
  width: 16px;
  height: 16px;
  margin-left: 3px;
  flex: none;
}

.combo-arr {
  width: 15px;
  align-self: stretch;
  background: #d4d0c8;
  position: relative;
}

.snap {
  width: 24px;
  flex: none;
}

.labels {
  display: flex;
  flex-direction: column;
  gap: 2px;
  flex: none;
  line-height: 14px;
  height: 31px;
  justify-content: space-around;
  font-size: 13px;
  color: #333;
}

.pct {
  font-size: 14px;
  text-align: center;
  color: #555;
}

.fields {
  display: flex;
  flex-direction: column;
  gap: 2px;
  flex: none;
}

.field {
  display: block;
  height: 15px;
  line-height: 13px;
  padding-left: 1px;
  background: #fff;
  border: 1px solid #a8a69e;
  font-size: 11px;
  white-space: nowrap;
  flex: none;
}

.icons {
  width: 16px;
  display: flex;
  flex-direction: column;
  gap: 1px;
  flex: none;
}

.icons svg {
  width: 16px;
  height: 16px;
}

.rot {
  width: 20px;
  height: 18px;
  flex: none;
}

.rot svg {
  width: 18px;
  height: 18px;
}

.rot+.field {
  height: 19px;
  line-height: 17px;
}

.degs {
  display: flex;
  flex-direction: column;
  gap: 9px;
  flex: none;
}

.deg {
  width: 5px;
  height: 5px;
  margin: 0 2px;
  flex: none;
  border: 1px solid #808080;
  border-radius: 50%;
}

.w14 { width: 14px; }
.w17 { width: 17px; }
.w39 { width: 39px; }
.w42 { width: 42px; }
.w43 { width: 43px; }
.w44 { width: 44px; }
.w71 { width: 71px; }
.w72 { width: 72px; }
.w73 { width: 73px; }

.ml1 { margin-left: 1px; }
.ml2 { margin-left: 2px; }
.ml3 { margin-left: 3px; }
.ml4 { margin-left: 4px; }
.ml5 { margin-left: 5px; }
.ml6 { margin-left: 6px; }
.ml7 { margin-left: 7px; }
.ml8 { margin-left: 8px; }
.ml10 { margin-left: 10px; }
.ml11 { margin-left: 11px; }
.ml14 { margin-left: 14px; }
.ml15 { margin-left: 15px; }

/* main area */
.main {
  height: 845px;
  display: flex;
}

.toolbox {
  width: 30px;
  display: flex;
  flex-direction: column;
  align-items: center;
  border-right: 1px solid #8c8a84;
  flex: none;
}

.hgrip {
  display: block;
  width: 22px;
  height: 5px;
  margin: 1px 0 4px;
  border-top: 1px solid #a8a69e;
  border-bottom: 1px solid #a8a69e;
  flex: none;
}

.tool {
  width: 24px;
  height: 26px;
  flex: none;
  display: flex;
  align-items: center;
  justify-content: center;
  position: relative;
}

.tool svg {
  width: 18px;
  height: 18px;
}

.tool-on {
  height: 24px;
  margin-bottom: 3px;
  background: #f2f0ea;
  border: 1px solid #606060;
}

.tool-text {
  font-size: 16px;
  font-weight: bold;
  color: #60606c;
}

.workspace {
  width: 1420px;
  display: flex;
  flex-direction: column;
  flex: none;
}

.ruler-top {
  height: 20px;
  display: flex;
  flex: none;
}

.ruler-corner {
  width: 14px;
  height: 14px;
  margin: 2px 0 0 5px;
  flex: none;
}

.ruler-h {
  margin-left: 1px;
}

.ruler-h,
.ruler-v {
  display: block;
  flex: none;
  fill: #111;
}

.ruler-h text,
.ruler-v text {
  font: 10px "Liberation Sans", "Noto Sans CJK SC", sans-serif;
  text-anchor: middle;
}

.guide {
  stroke: #000;
  stroke-dasharray: 2 2;
}

.mid {
  height: 807px;
  display: flex;
  flex: none;
}

.ruler-v {
  margin-left: -1px;
}

.canvas {
  position: relative;
  width: 1383px;
  flex: none;
  background: #fff;
  border-top: 1px solid #808080;
  border-left: 1px solid #808080;
}

.page {
  position: absolute;
  left: 463px;
  top: 80px;
  width: 457px;
  height: 648px;
  background: #fff;
  border: 1px solid #666;
  box-shadow: 5px 5px 0 #b0b0b0;
}

.art {
  position: absolute;
  left: 582px;
  top: 225px;
  display: flex;
  align-items: flex-start;
}

.art-col {
  width: 57px;
}

.cell {
  position: relative;
  height: 47px;
  display: flex;
  align-items: center;
  justify-content: center;
}

.glyph {
  display: block;
  font: 300 44px "Noto Sans CJK SC", sans-serif;
  line-height: 47px;
  color: #222;
}

.node {
  position: absolute;
  width: 5px;
  height: 5px;
  background: #fff;
  border: 1px solid #000;
}

.col1 { margin-top: 35px; }
.col3 { margin-top: 9px; }
.col4 { margin-top: 42px; }

.col1 .glyph { transform: skewY(-22deg); }
.col2 .glyph { transform: skewY(-32deg) scaleX(1.05); }
.col3 .glyph { transform: skewY(27deg); }
.col4 .glyph { transform: skewY(4deg) scaleY(.9); }

.col1 .node { left: -1px; top: 40px; }
.col2 .node { left: 0; top: 56px; }
.col3 .node { left: -1px; top: 14px; }
.col4 .node { left: -1px; top: 21px; }

.sel {
  position: absolute;
  left: 573px;
  top: 213px;
  width: 239px;
  height: 249px;
  display: grid;
  grid-template-columns: repeat(3, 7px);
  grid-template-rows: repeat(3, 7px);
  justify-content: space-between;
  align-content: space-between;
}

.hd {
  background: #000;
}

.cross {
  font: bold 14px/7px "Liberation Sans", sans-serif;
  text-align: center;
}

.vscroll {
  width: 17px;
  display: flex;
  flex-direction: column;
  flex: none;
  border-left: 1px solid #d4d0c8;
}

.sbtn {
  width: 16px;
  height: 16px;
  flex: none;
  display: flex;
  align-items: center;
  justify-content: center;
  background: #d4d0c8;
  border: 1px solid;
  border-color: #fff #808080 #808080 #fff;
}

.track {
  flex: 1;
  background: repeating-conic-gradient(#d4d0c8 0 25%, #fff 0 50%) 0 0 / 2px 2px;
}

.track-top {
  flex: none;
  height: 174px;
}

.thumb-v {
  height: 427px;
  flex: none;
  background: #d4d0c8;
  border: 1px solid;
  border-color: #fff #404040 #404040 #fff;
  border-right-width: 2px;
  border-bottom-width: 2px;
}

.tri-up,
.tri-down,
.tri-left,
.tri-right {
  display: block;
  width: 0;
  height: 0;
  border: 4px solid transparent;
}

.tri-up {
  border-top: 0;
  border-bottom-color: #000;
}

.tri-down {
  border-bottom: 0;
  border-top-color: #000;
}

.tri-left {
  border-left: 0;
  border-right-color: #000;
}

.tri-right {
  border-right: 0;
  border-left-color: #000;
}

.nav {
  height: 18px;
  display: flex;
  align-items: center;
  flex: none;
  border-top: 1px solid #808080;
}

.nav-corner {
  width: 21px;
  margin-right: 1px;
  text-align: center;
  font-size: 10px;
  font-weight: bold;
}

.nav-ic {
  width: 14px;
  height: 14px;
  flex: none;
}

.nav-ic2 {
  margin-left: 7px;
}

.go {
  width: 0;
  height: 0;
  flex: none;
  position: relative;
  border: 5px solid transparent;
}

.go-first,
.go-prev {
  border-left: 0;
  border-right-color: #a0a0a0;
}

.go-first {
  margin-left: 6px;
  border-left: 2px solid #a0a0a0;
  width: 2px;
}

.go-prev {
  margin-left: 9px;
}

.pagenum {
  margin-left: 22px;
  width: 52px;
  letter-spacing: 1px;
  font-size: 12px;
}

.go-next,
.go-last {
  border-right: 0;
  border-left-color: #a0a0a0;
}

.go-next {
  margin-left: 1px;
}

.go-last {
  margin-left: 8px;
  width: 2px;
  border-right: 2px solid #a0a0a0;
}

.pagetab {
  width: 54px;
  height: 17px;
  margin-left: 3px;
  margin-top: -1px;
  padding-left: 13px;
  line-height: 15px;
  background: #fff;
  flex: none;
  clip-path: polygon(0 0, 86% 0, 100% 60%, 100% 100%, 0 100%);
}

.hgrip2 {
  width: 5px;
  height: 14px;
  margin-left: auto;
  margin-right: 1px;
  border-left: 1px solid #a8a69e;
  border-right: 1px solid #a8a69e;
  flex: none;
}

.thumb-h {
  width: 647px;
  height: 16px;
  flex: none;
  background: #d4d0c8;
  border: 1px solid;
  border-color: #fff #404040 #404040 #fff;
  border-bottom-width: 2px;
}

.nav-zoom {
  width: 14px;
  height: 14px;
  margin: 0 2px 0 1px;
  flex: none;
}

/* docker */
.docker {
  width: 186px;
  display: flex;
  flex-direction: column;
  flex: none;
  border-left: 1px solid #a8a69e;
  border-right: 1px solid #a8a69e;
  position: relative;
  z-index: 1;
}

.docker-title {
  height: 20px;
  display: flex;
  align-items: center;
  justify-content: space-between;
  padding: 0 7px 0 7px;
  background: #b4b2aa;
  border-bottom: 1px solid #8c8a84;
  font-size: 13px;
  margin-right: -25px;
}

.docker-ctl {
  display: flex;
  align-items: center;
  gap: 12px;
  font-size: 15px;
  color: #60605c;
}

.dk-more {
  font-size: 17px;
  line-height: 16px;
}

.dk-up {
  width: 0;
  height: 0;
  border: 5px solid transparent;
  border-top: 0;
  border-bottom-color: #60605c;
}

.docker-body {
  padding: 7px 4px 0 7px;
}

.combo-dock {
  width: 150px;
  height: 20px;
  margin-left: 1px;
}

.combo-dock .combo-val {
  padding-left: 3px;
  font-size: 12px;
}

.combo-dock .combo-arr {
  margin: 1px;
  border: 1px solid;
  border-color: #fff #404040 #404040 #fff;
}

.dock-rule {
  margin: 8px 0 0;
  height: 2px;
  border: 0;
  border-top: 1px solid #a8a69e;
  border-bottom: 1px solid #f4f2ee;
}

.dock-label {
  margin: 6px 0 0 4px;
  line-height: 16px;
}

.dock-inner {
  margin: 3px 0 0 19px;
}

.preview {
  display: block;
  background: #fff;
  border: 1px solid #8c8a84;
}

.dock-keep {
  margin: 6px 0 2px;
  line-height: 16px;
}

.check {
  display: flex;
  align-items: center;
  gap: 5px;
  height: 19px;
}

.box {
  width: 13px;
  height: 13px;
  flex: none;
  background: #fff;
  border: 1px solid;
  border-color: #808080 #f4f2ee #f4f2ee #808080;
  font-size: 10px;
  line-height: 11px;
  text-align: center;
}

.dock-btn {
  display: block;
  width: 135px;
  height: 23px;
  margin-top: 4px;
  border: 1px solid;
  border-color: #f4f2ee #808080 #808080 #f4f2ee;
  color: #98968e;
  text-shadow: 1px 1px #fff;
}

/* docker tabs */
.tabs {
  width: 24px;
  padding-top: 23px;
  flex: none;
  display: flex;
  flex-direction: column;
}

.tab {
  width: 21px;
  display: flex;
  flex-direction: column;
  align-items: center;
  gap: 3px;
  padding-top: 4px;
  border: 1px solid #b4b2aa;
  border-left: 0;
  border-radius: 0 4px 4px 0;
  color: #333;
  font-size: 11px;
  position: relative;
  overflow: hidden;
}

.tab svg {
  width: 16px;
  height: 16px;
  flex: none;
}

.tab span {
  writing-mode: vertical-rl;
  text-orientation: sideways;
  white-space: nowrap;
  line-height: 14px;
}

.tab1 { height: 50px; }
.tab2 { height: 83px; }
.tab3 { height: 72px; }
.tab4 { height: 59px; }
.tab5 { height: 51px; }
.tab6 { height: 61px; }

.tab-on {
  background: #e4e1da;
  border-color: #f4f2ee;
}

.tab-x {
  position: absolute;
  left: 3px;
  bottom: 4px;
  width: 15px;
  height: 15px;
  font: bold 13px/13px "Liberation Sans", sans-serif;
  text-align: center;
  border: 1px solid #808080;
}

/* colour palette */
.palette {
  width: 20px;
  flex: none;
  display: flex;
  flex-direction: column;
  align-items: center;
  border-left: 1px solid #8c8a84;
}

.hgrip-pal {
  width: 16px;
  margin: 3px 0 2px;
}

.pal-play {
  width: 14px;
  height: 14px;
  flex: none;
  border-radius: 50%;
  background: #f4f2ee;
  border: 1px solid #808080;
  position: relative;
}

.pal-play::after {
  content: "";
  position: absolute;
  left: 4px;
  top: 2px;
  border: 4px solid transparent;
  border-right: 0;
  border-left-color: #000;
}

.pal-up {
  margin: 10px 0 4px;
  border-bottom-color: #908e88;
}

.pal-down {
  margin: 6px 0 9px;
}

.sw {
  width: 17px;
  height: 17px;
  flex: none;
  border: 1px solid #6a6a66;
  border-bottom-width: 0;
}

.sw-none {
  height: 16px;
  margin-bottom: 1px;
  border: 1px solid #404040;
  background:
    linear-gradient(45deg, transparent 47%, #333 47% 53%, transparent 53%),
    linear-gradient(-45deg, #fff 47%, #333 47% 53%, #fff 53%);
}

.pal-end {
  border-left-color: #000;
  transform: scaleX(-1);
}

/* status bar */
.status {
  flex: 1;
  display: flex;
  border-top: 1px solid #f4f2ee;
  position: relative;
}

.status-left {
  flex: 1;
  padding-top: 2px;
}

.st-row {
  height: 21px;
  display: flex;
  align-items: center;
  white-space: nowrap;
  font-size: 12px;
}

.st-a {
  width: 404px;
  padding-left: 4px;
  letter-spacing: -.1px;
}

.st-b {
  width: 120px;
  padding-left: 4px;
}

.st-c {
  letter-spacing: -.2px;
}

.st-d {
  letter-spacing: -.05px;
}

.status-right {
  width: 204px;
  padding-top: 3px;
}

.st-color {
  height: 20px;
  display: flex;
  align-items: center;
  gap: 4px;
}

.st-color svg {
  width: 16px;
  height: 16px;
}

.st-sw {
  width: 18px;
  height: 18px;
  border: 1px solid #666;
}

.st-black {
  background: #2b2a26;
}

.st-none {
  background:
    linear-gradient(45deg, transparent 48%, #333 48% 52%, transparent 52%),
    linear-gradient(-45deg, #fff 48%, #333 48% 52%, #fff 52%);
}

.status::after {
  content: "";
  position: absolute;
  left: 0;
  right: 0;
  bottom: 4px;
  height: 1px;
  background: #a8a69e;
}
```
